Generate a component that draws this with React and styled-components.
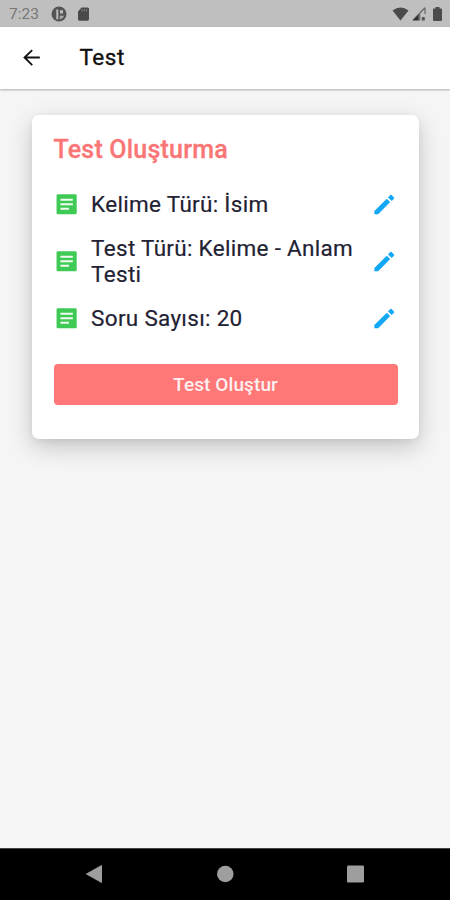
import React from "react";
import styled, { createGlobalStyle } from "styled-components";

const GlobalStyle = createGlobalStyle`
  * { box-sizing: border-box; }
  body { margin: 0; font-family: Roboto, "Noto Sans", sans-serif; }
`;

const Screen = styled.div`
  display: flex;
  flex-direction: column;
  width: 450px;
  height: 900px;
  overflow: hidden;
  background: #f5f5f5;
`;

const StatusBar = styled.div`
  flex: none;
  display: flex;
  align-items: center;
  height: 27px;
  padding: 0 5px 0 9px;
  background: #bfbfbf;
  color: #777;
  svg { display: block; }
`;

const Clock = styled.span`
  width: 42px;
  font-size: 15.5px;
  line-height: 27px;
  padding-top: 2px;
`;

const StatusIcons = styled.div`
  display: flex;
  gap: ${(p) => p.$gap}px;
  margin-left: ${(p) => (p.$end ? "auto" : "0")};
`;

const AppBar = styled.header`
  flex: none;
  display: flex;
  align-items: center;
  height: 62px;
  padding: 0 19px 2px;
  background: #fff;
  box-shadow: 0 0.5px 2px rgba(0, 0, 0, 0.3);
`;

const BackButton = styled.button`
  display: flex;
  width: 60.5px;
  padding: 0;
  border: 0;
  background: none;
`;

const ScreenTitle = styled.h1`
  margin: 0;
  color: #101010;
  font-size: 22.5px;
  font-weight: 400;
  line-height: 28px;
  letter-spacing: 0.5px;
  -webkit-text-stroke: 0.35px;
`;

const Content = styled.main`
  flex: 1;
  padding: 25.5px 31px 0 32px;
`;

const Card = styled.section`
  height: 324.5px;
  padding: 20px 21.5px 0;
  border-radius: 7px;
  background: #fff;
  box-shadow: 0 8px 24px rgba(0, 0, 0, 0.2), 0 2px 6px rgba(0, 0, 0, 0.06);
`;

const CardTitle = styled.h2`
  margin: 0 0 26.2px;
  color: #fa7676;
  font-size: 25px;
  font-weight: 500;
  line-height: 30px;
  letter-spacing: 0.2px;
  -webkit-text-stroke: 0.3px;
`;

const Options = styled.div`
  display: flex;
  flex-direction: column;
  gap: 17.7px;
`;

const OptionRow = styled.div`
  display: flex;
  align-items: center;
`;

const OptionLabel = styled.span`
  flex: 1;
  padding-left: 11px;
  color: #1f2233;
  font-size: 22.5px;
  font-weight: 400;
  line-height: 26.3px;
  letter-spacing: 0.3px;
  -webkit-text-stroke: 0.2px;
`;

const Glyph = styled.svg`
  display: block;
  flex: none;
  width: 26.6px;
  height: 26.6px;
  fill: ${(p) => p.$color};
`;

const CreateButton = styled.button`
  display: block;
  width: 100%;
  height: 41px;
  margin-top: 32px;
  padding: 0;
  border: 0;
  border-radius: 4px;
  background: #ff7777;
  color: #fff0f0;
  font: 500 19px/41px Roboto, "Noto Sans", sans-serif;
  letter-spacing: 0.1px;
`;

const NavBar = styled.nav`
  flex: none;
  display: flex;
  justify-content: space-between;
  align-items: center;
  height: 52px;
  padding: 0 85px 2px;
  border-top: 1px solid #444;
  background: #000;
  svg { display: block; fill: #9e9e9e; }
`;

const options = [
  "Kelime Türü: İsim",
  "Test Türü: Kelime - Anlam Testi",
  "Soru Sayısı: 20",
];

function Option({ label }) {
  return (
    <OptionRow>
      <Glyph $color="#3fca55" viewBox="0 0 24 24">
        <rect x="2.3" y="3" width="18.200" height="18" rx="1.200" />
        <path d="M5.800 7.800H17M5.800 11.900H17M5.800 16H13.500" stroke="#f1fbf2" strokeWidth="1.800" />
      </Glyph>
      <OptionLabel>{label}</OptionLabel>
      <Glyph $color="#12a8f5" viewBox="0 0 24 24">
        <path d="M3 18.200v2.300q0 .5.500.500h2.500q.4 0 .7-.3L17.300 10 14.200 6.900 3.500 17.500q-.5.400-.5.700z" />
        <path d="M15.300 5.800l2.100-2.100q.6-.6 1.200 0l2.100 2.100q.6.600 0 1.200l-2 2z" />
      </Glyph>
    </OptionRow>
  );
}

export default function App() {
  return (
    <Screen>
      <GlobalStyle />
      <StatusBar>
        <Clock>7:23</Clock>
        <StatusIcons $gap={10}>
          <svg width="16" height="16" viewBox="0 0 16 16">
            <circle cx="8" cy="8" r="7.500" fill="#555" />
            <path d="M5.300 3.500h2v9.800h-2zM9 4.300h3v3.200H9z" fill="#bdbdbd" />
            <path d="M8.800 9.800h4.400a5.500 5.500 0 0 1-4.400 3.600z" fill="#a9a9a9" />
          </svg>
          <svg width="13" height="16" viewBox="0 0 13 16">
            <path d="M4.500 1.500h6A1.400 1.400 0 0 1 12 3v10.300a1.400 1.400 0 0 1-1.500 1.400h-8A1.400 1.400 0 0 1 1 13.300V5.500z" fill="#4a4a4a" />
            <path d="M5 3v2.500M7.300 3v2.500M9.600 3v2.500" stroke="#858585" strokeWidth="0.900" />
          </svg>
        </StatusIcons>
        <StatusIcons $gap={3} $end>
          <svg width="17" height="16" viewBox="0 0 17 16">
            <path d="M0.500 4.500Q8.500-1.500 16.500 4.500L8.500 14.500z" fill="#4a4a4a" />
          </svg>
          <svg width="15" height="16" viewBox="0 0 15 16">
            <path d="M13 1.500V8M12.700 2 1.200 14" fill="none" stroke="#666" strokeWidth="1.200" />
            <path d="M0.500 14.500 6.700 8.500v6z" fill="#303030" />
            <path d="M7.200 8h1v6.500h-1zM9.800 11h3v3.500h-3z" fill="#555" />
          </svg>
          <svg width="15" height="16" viewBox="0 0 15 16">
            <path d="M5.500 1h4v1.500H11q1 0 1 1V14q0 1-1 1H4q-1 0-1-1V3.500q0-1 1-1h1.500z" fill="#4c4c4c" />
          </svg>
        </StatusIcons>
      </StatusBar>
      <AppBar>
        <BackButton aria-label="Geri">
          <svg width="25" height="25" viewBox="0 0 24 24" fill="#111">
            <path d="M20 11.100H7.600l5.700-5.700L12.100 4.200 4 12l8.100 7.800 1.200-1.200-5.700-5.700H20z" />
          </svg>
        </BackButton>
        <ScreenTitle>Test</ScreenTitle>
      </AppBar>
      <Content>
        <Card>
          <CardTitle>Test Oluşturma</CardTitle>
          <Options>
            {options.map((label) => (
              <Option key={label} label={label} />
            ))}
          </Options>
          <CreateButton>Test Oluştur</CreateButton>
        </Card>
      </Content>
      <NavBar>
        <svg width="18" height="18" viewBox="0 0 18 18">
          <path d="M16.500 0.600V17.400L1.500 9z" stroke="#9e9e9e" strokeLinejoin="round" />
        </svg>
        <svg width="18" height="18" viewBox="0 0 18 18">
          <circle cx="9.300" cy="9" r="8.300" />
        </svg>
        <svg width="18" height="18" viewBox="0 0 18 18">
          <rect x="0" y="0.500" width="17" height="17" rx="1.200" />
        </svg>
      </NavBar>
    </Screen>
  );
}
